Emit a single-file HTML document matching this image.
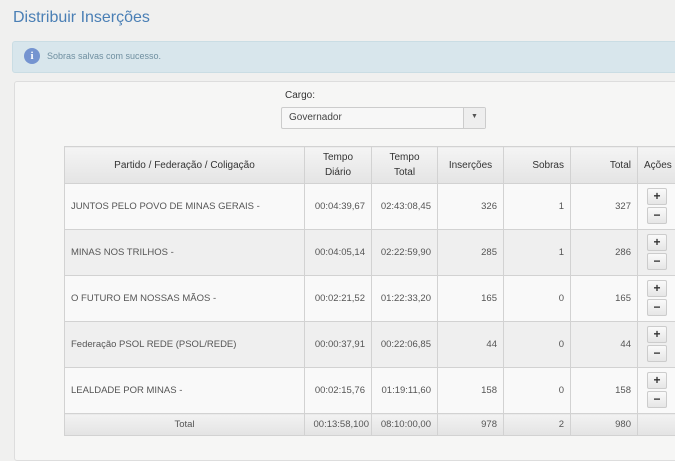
<!DOCTYPE html><html><head><meta charset="utf-8"><style>
*{margin:0;padding:0;box-sizing:border-box}
body{width:675px;height:450px;overflow:hidden;background:#f0f0ef;font-family:"Liberation Sans",sans-serif;position:relative;color:#444}
.a{position:absolute}
.t{left:13px;top:9px;font-size:16px;color:#4a7fb5;}
.al{left:12px;top:41px;width:670px;height:32px;background:#d8e6ec;border:1px solid #cadde4;border-radius:3px}
.ic{left:24px;top:48px;width:16px;height:16px;border-radius:50%;background:#7594d0;color:#fff;font-size:11px;font-weight:bold;text-align:center;line-height:16px;font-family:"Liberation Serif",serif}
.am{left:47px;top:51px;font-size:9px;color:#6f8fa0}
.pn{left:14px;top:81px;width:670px;height:380px;background:#f6f6f5;border:1px solid #ddd;border-radius:3px}
.lb{left:285px;top:90px;font-size:10px;color:#333}
.sel{left:281px;top:107px;width:205px;height:22px;background:#f7f7f7;border:1px solid #ccc;border-radius:2px;font-size:10px;line-height:20px;padding-left:7px;color:#444}
.ar{left:463px;top:108px;width:22px;height:20px;background:#eee;border-left:1px solid #ccc;font-size:7px;text-align:center;line-height:18px;color:#555}
table{position:absolute;left:64px;top:146px;border-collapse:collapse;font-size:9.5px;color:#555;table-layout:fixed;width:640px}
td,th{border:1px solid #d2d2d2;padding:0 6px;white-space:nowrap;overflow:hidden}
th{background:linear-gradient(#f4f4f4,#e4e4e4);font-weight:normal;color:#333;height:37px;font-size:10px;line-height:15px}
td{height:46px;text-align:right}
td.l{text-align:left}
tr.o td{background:#f9f9f9}
tr.e td{background:#efefef}
tr.f td{height:22px;background:linear-gradient(#f2f2f2,#e3e3e3)}
.b{display:block;width:20px;height:17px;margin:1px 0 2px 2px;background:linear-gradient(#fafafa,#e6e6e6);border:1px solid #ccc;border-radius:2px;text-align:center;font-weight:bold;font-size:12px;line-height:14px;color:#333}
</style></head><body>
<div class="a t">Distribuir Inserções</div>
<div class="a al"></div><div class="a ic">i</div><div class="a am">Sobras salvas com sucesso.</div>
<div class="a pn"></div>
<div class="a lb">Cargo:</div>
<div class="a sel">Governador</div><div class="a ar">▼</div>
<table>
<colgroup><col style="width:240px"><col style="width:67px"><col style="width:66px"><col style="width:66px"><col style="width:67px"><col style="width:67px"><col style="width:67px"></colgroup>
<tr><th>Partido / Federação / Coligação</th><th>Tempo<br>Diário</th><th>Tempo<br>Total</th><th>Inserções</th><th style="text-align:right">Sobras</th><th style="text-align:right">Total</th><th style="text-align:left">Ações</th></tr>
<tr class="o"><td class="l">JUNTOS PELO POVO DE MINAS GERAIS -</td><td>00:04:39,67</td><td>02:43:08,45</td><td>326</td><td>1</td><td>327</td><td class="l" style="padding:0 6px 0 7px"><span class="b">+</span><span class="b">−</span></td></tr>
<tr class="e"><td class="l">MINAS NOS TRILHOS -</td><td>00:04:05,14</td><td>02:22:59,90</td><td>285</td><td>1</td><td>286</td><td class="l" style="padding:0 6px 0 7px"><span class="b">+</span><span class="b">−</span></td></tr>
<tr class="o"><td class="l">O FUTURO EM NOSSAS MÃOS -</td><td>00:02:21,52</td><td>01:22:33,20</td><td>165</td><td>0</td><td>165</td><td class="l" style="padding:0 6px 0 7px"><span class="b">+</span><span class="b">−</span></td></tr>
<tr class="e"><td class="l">Federação PSOL REDE (PSOL/REDE)</td><td>00:00:37,91</td><td>00:22:06,85</td><td>44</td><td>0</td><td>44</td><td class="l" style="padding:0 6px 0 7px"><span class="b">+</span><span class="b">−</span></td></tr>
<tr class="o"><td class="l">LEALDADE POR MINAS -</td><td>00:02:15,76</td><td>01:19:11,60</td><td>158</td><td>0</td><td>158</td><td class="l" style="padding:0 6px 0 7px"><span class="b">+</span><span class="b">−</span></td></tr>
<tr class="f"><td style="text-align:center">Total</td><td style="padding:0 2px">00:13:58,100</td><td>08:10:00,00</td><td>978</td><td>2</td><td>980</td><td></td></tr>
</table>
</body></html>
